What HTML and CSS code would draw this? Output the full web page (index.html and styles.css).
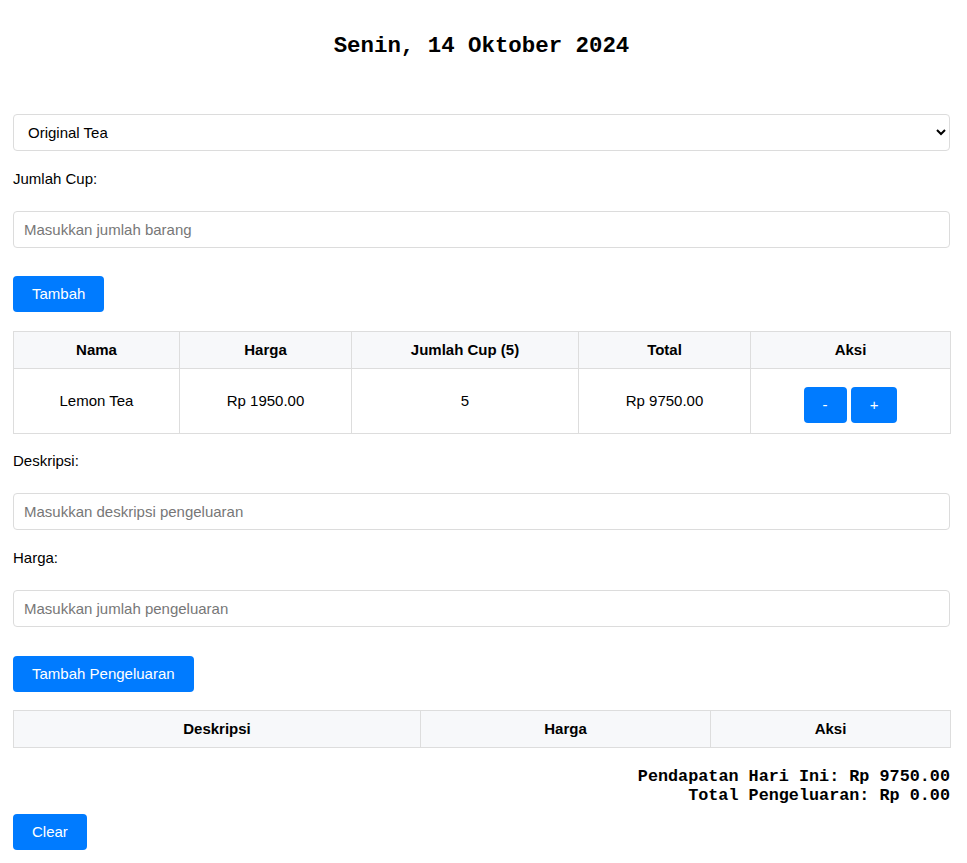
FILE: index.html
```html
<!DOCTYPE html>
<html lang="id">
<head>
<meta charset="utf-8">
<title>Kasir Teh</title>
<link rel="stylesheet" href="styles.css">
</head>
<body>
<div class="page">
  <h1 class="date">Senin, 14 Oktober 2024</h1>

  <select class="field select-field">
    <option>Original Tea</option>
    <option>Lemon Tea</option>
  </select>

  <label class="label">Jumlah Cup:</label>
  <input class="field" type="number" placeholder="Masukkan jumlah barang">

  <button class="btn btn-first">Tambah</button>

  <table class="table sales">
    <colgroup>
      <col class="c-166"><col class="c-172"><col class="c-227"><col class="c-172"><col class="c-200">
    </colgroup>
    <thead>
      <tr><th>Nama</th><th>Harga</th><th>Jumlah Cup (5)</th><th>Total</th><th>Aksi</th></tr>
    </thead>
    <tbody>
      <tr>
        <td>Lemon Tea</td>
        <td>Rp 1950.00</td>
        <td>5</td>
        <td>Rp 9750.00</td>
        <td class="actions"><button class="btn btn-sm">-</button> <button class="btn btn-sm">+</button></td>
      </tr>
    </tbody>
  </table>

  <label class="label label-after-table">Deskripsi:</label>
  <input class="field" type="text" placeholder="Masukkan deskripsi pengeluaran">

  <label class="label">Harga:</label>
  <input class="field" type="number" placeholder="Masukkan jumlah pengeluaran">

  <button class="btn btn-second">Tambah Pengeluaran</button>

  <table class="table expenses">
    <colgroup>
      <col class="c-407"><col class="c-290"><col class="c-240">
    </colgroup>
    <thead>
      <tr><th>Deskripsi</th><th>Harga</th><th>Aksi</th></tr>
    </thead>
    <tbody></tbody>
  </table>

  <div class="summary">
    <div>Pendapatan Hari Ini: Rp 9750.00</div>
    <div>Total Pengeluaran: Rp 0.00</div>
  </div>

  <button class="btn btn-clear">Clear</button>
</div>
</body>
</html>
```

FILE: styles.css
```css
* { box-sizing: border-box; }

html, body {
  margin: 0;
  padding: 0;
  background: #fff;
}

body {
  font-family: "Liberation Sans", Arial, sans-serif;
  font-size: 15px;
  line-height: 17px;
  color: #000;
}

.page {
  display: flex;
  flex-direction: column;
  align-items: flex-start;
  margin: 0 17px 0 13px;
  padding-top: 33px;
  padding-bottom: 14px;
}

.date {
  align-self: stretch;
  margin: 0 0 55px;
  text-align: center;
  font-family: "Liberation Mono", "Courier New", monospace;
  font-weight: bold;
  font-size: 22.4px;
  line-height: 26px;
}

.field {
  display: block;
  width: 100%;
  height: 37px;
  padding: 0 10px;
  border: 1px solid #dcdcdc;
  border-radius: 4px;
  background: #fff;
  font-family: "Liberation Sans", Arial, sans-serif;
  font-size: 15px;
  color: #000;
}

.field::placeholder { color: #777; }

.select-field {
  padding-left: 10px;
}

.label {
  display: block;
  margin: 19px 0 24px;
}

.label-after-table { margin-top: 18px; }

.btn {
  display: inline-block;
  border: 0;
  border-radius: 4px;
  background: #007bff;
  color: #fff;
  font-family: "Liberation Sans", Arial, sans-serif;
  font-size: 15px;
  line-height: 18px;
  padding: 9px 19px;
  cursor: pointer;
}

.btn-first { margin-top: 28px; }
.btn-second { margin-top: 29px; }

.table {
  width: 100%;
  border-collapse: collapse;
  table-layout: fixed;
  margin-top: 19px;
  border: 1px solid #dddddd;
}

.expenses { margin-top: 18px; }

.table th, .table td {
  border: 1px solid #dddddd;
  text-align: center;
  vertical-align: middle;
}

.table th {
  background: #f7f8fa;
  font-weight: bold;
  padding: 9px 10px;
  line-height: 18px;
}

.table td {
  padding: 9px 10px 11px;
  height: 64px;
}

.table td.actions {
  white-space: nowrap;
  padding: 10px;
}

.btn-sm {
  vertical-align: top;
  margin-top: 8px;
  padding: 9px 19px;
}

.c-166 { width: 166px; }
.c-172 { width: 172px; }
.c-227 { width: 227px; }
.c-200 { width: 200px; }
.c-407 { width: 407px; }
.c-290 { width: 290px; }
.c-240 { width: 240px; }

.summary {
  align-self: stretch;
  margin-top: 19px;
  text-align: right;
  font-family: "Liberation Mono", "Courier New", monospace;
  font-weight: bold;
  font-size: 16.8px;
  line-height: 19px;
}

.btn-clear { margin-top: 9px; }
```
